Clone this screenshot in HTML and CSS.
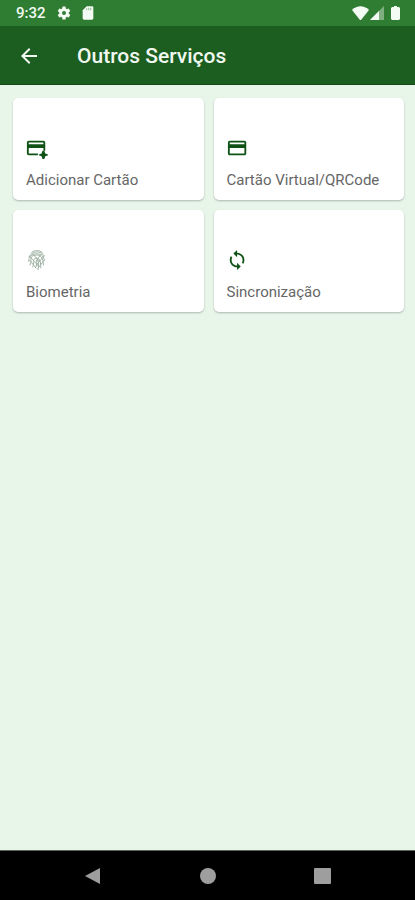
FILE: index.html
```html
<!DOCTYPE html>
<html lang="pt-BR">
<head>
  <meta charset="UTF-8" />
  <meta name="viewport" content="width=device-width, initial-scale=1.0" />
  <title>Outros Serviços</title>
  <link rel="stylesheet" href="styles.css">
</head>
<body>
  <div class="status-bar">
    <span class="clock">9:32</span>
    <svg class="status-icon gear" viewBox="0 0 24 24"><path d="M19.14 12.94c.04-.3.06-.61.06-.94s-.02-.64-.07-.94l2.03-1.58a.49.49 0 0 0 .12-.61l-1.92-3.32a.49.49 0 0 0-.59-.22l-2.39.96a7 7 0 0 0-1.62-.94l-.36-2.54a.48.48 0 0 0-.48-.41h-3.84a.47.47 0 0 0-.47.41l-.36 2.54c-.59.24-1.13.57-1.62.94l-2.39-.96a.48.48 0 0 0-.59.22L2.740 8.870a.47.47 0 0 0 .12.61l2.030 1.580c-.05.3-.09.63-.09.94s.02.64.07.94l-2.030 1.580a.49.49 0 0 0-.12.61l1.920 3.320c.12.22.37.29.59.22l2.390-.96c.5.38 1.030.7 1.620.94l.36 2.540c.05.24.24.41.48.41h3.840c.24 0 .44-.17.47-.41l.36-2.540a7 7 0 0 0 1.620-.94l2.390.96c.22.08.47 0 .59-.22l1.920-3.320a.47.47 0 0 0-.12-.61zM12 15a3 3 0 1 1 0-6 3 3 0 0 1 0 6z"/></svg>
    <svg class="status-icon sd" viewBox="0 0 24 24"><path d="M18 2h-8L4 8v12c0 1.100.9 2 2 2h12c1.100 0 2-.9 2-2V4c0-1.100-.9-2-2-2z"/><path class="notch" d="M9 5h2v3H9zM12 4h2v4h-2zM15 4h2v4h-2z"/></svg>
    <div class="status-right">
      <svg class="wifi" viewBox="0 0 18 14"><path d="M8 14 0 4C5 -1 12 -1 17 4L9 14z"/></svg>
      <svg class="signal" viewBox="0 0 14 14"><path d="M0 14 14 0v14z" opacity=".4"/><path d="M0 14 9 5v9z"/></svg>
      <svg class="battery" viewBox="0 0 9 14"><path d="M3 0h3v1h2l1 1v11l-1 1H1l-1-1V2l1-1h2z"/></svg>
    </div>
  </div>

  <header class="app-bar">
    <button class="back" type="button" aria-label="Voltar">
      <svg viewBox="0 0 24 24"><path d="M20 11H7.830l5.590-5.590L12 4l-8 8 8 8 1.410-1.410L7.830 13H20z"/></svg>
    </button>
    <h1>Outros Serviços</h1>
  </header>

  <main class="services">
    <button class="card" type="button">
      <svg viewBox="0 0 24 24"><path d="M3 4h16a2 2 0 0 1 2 2v9h-2v-3H3v6h10v2H3a2 2 0 0 1-2-2V6c0-1.100.9-2 2-2zm0 2v2h16V6z"/><path d="M18 15h2l1 3 3 1v1l-3 1-1 3h-2l-1-3-3-1v-1l3-1z"/></svg>
      <span>Adicionar Cartão</span>
    </button>
    <button class="card" type="button">
      <svg viewBox="0 0 24 24"><path d="M19 4H3c-1.110 0-1.990.89-1.990 2L1 18c0 1.110.89 2 2 2h16c1.110 0 2-.89 2-2V6c0-1.110-.89-2-2-2zm0 14H3v-6h16v6zm0-10H3V6h16v2z"/></svg>
      <span>Cartão Virtual/QRCode</span>
    </button>
    <button class="card" type="button">
      <svg class="fingerprint" viewBox="0 0 24 24">
        <path d="M6 4C9 1 15 1 18 4M3 9C6 2 17 1 20 8M3 14C2 3 20 2 20 13M4 18C7 14 3 8 9 7 16 5 19 10 19 18M7 20c3-5-1-9 4-10 5 0 5 5 5 11M10 21c3-4 0-6 2-9 2 2 2 6 1 11M4 12l7 9M4 8l10 11M7 5l9 10M20 7l-9 11M17 5l-6 8M20 12l-7 9"/>
      </svg>
      <span>Biometria</span>
    </button>
    <button class="card" type="button">
      <svg viewBox="0 0 24 24"><path d="M11 4V1L7 5l4 4V6c3.310 0 6 2.690 6 6 0 1.010-.25 1.970-.7 2.800l1.460 1.460A7.930 7.930 0 0 0 19 12c0-4.420-3.580-8-8-8zm0 14c-3.310 0-6-2.690-6-6 0-1.010.25-1.970.7-2.800L4.240 7.740A7.930 7.930 0 0 0 3 12c0 4.420 3.580 8 8 8v3l4-4-4-4v3z"/></svg>
      <span>Sincronização</span>
    </button>
  </main>

  <nav class="nav-bar">
    <button type="button" aria-label="Voltar"><svg viewBox="0 0 18 18"><path d="M1 9 16 1v16z"/></svg></button>
    <button type="button" aria-label="Início"><svg viewBox="0 0 18 18"><circle cx="9" cy="9" r="8"/></svg></button>
    <button type="button" aria-label="Recentes"><svg viewBox="0 0 18 18"><rect x="0" y="1" width="17" height="16" rx="1"/></svg></button>
  </nav>
</body>
</html>
```
FILE: styles.css
```css
* {
  box-sizing: border-box;
}

body {
  margin: 0;
  font-family: Roboto, sans-serif;
  background: #e8f5e9;
  min-height: 100vh;
  display: flex;
  flex-direction: column;
}

button {
  margin: 0;
  padding: 0;
  border: none;
  background: none;
  font-family: inherit;
  cursor: pointer;
}

svg {
  display: block;
  fill: currentColor;
}

.status-bar {
  height: 26px;
  padding: 0 15px 0 16px;
  display: flex;
  align-items: center;
  background: #2e7d32;
  color: #f4faf4;
}

.clock {
  font-size: 15px;
  font-weight: 500;
  line-height: 26px;
}

.status-icon {
  width: 16px;
  height: 16px;
  margin-left: 8px;
}

.gear {
  margin-left: 10px;
}

.notch {
  fill: #a9c9ab;
}

.status-right {
  margin-left: auto;
  display: flex;
}

.wifi {
  width: 18px;
  height: 14px;
}

.signal {
  width: 14px;
  height: 14px;
}

.battery {
  width: 9px;
  height: 14px;
  margin-left: 7px;
}

.app-bar {
  height: 59px;
  padding: 2px 17px 0;
  display: flex;
  align-items: center;
  background: #1b5e20;
  border-bottom: 1px solid #154a19;
  color: #f1f8f1;
}

.back {
  color: inherit;
}

.back svg {
  width: 24px;
  height: 24px;
}

.app-bar h1 {
  margin: 0 0 0 36px;
  font-size: 21px;
  font-weight: 500;
  line-height: 28px;
}

.services {
  flex: 1;
  padding: 13px 11px 13px 13px;
  display: grid;
  grid-template-columns: 1fr 1fr;
  align-content: start;
  gap: 10px;
}

.card {
  height: 102px;
  padding: 0 13px 10px;
  display: flex;
  flex-direction: column;
  align-items: flex-start;
  justify-content: flex-end;
  gap: 11px;
  background: #fff;
  border-radius: 5px;
  box-shadow: 0 1px 2px rgba(0, 0, 0, 0.25);
  color: #666;
  font-size: 15px;
  line-height: 20px;
}

.card svg {
  width: 22px;
  height: 22px;
  color: #0f5216;
  overflow: visible;
}

.card .fingerprint {
  fill: none;
  stroke: #9aaea0;
  stroke-width: 1;
}

.nav-bar {
  height: 50px;
  padding: 0 35px;
  display: flex;
  align-items: center;
  background: #000;
  border-top: 1px solid #5b625c;
}

.nav-bar button {
  flex: 1;
  display: flex;
  justify-content: center;
  color: #9e9e9e;
}

.nav-bar svg {
  width: 18px;
  height: 18px;
}
```
